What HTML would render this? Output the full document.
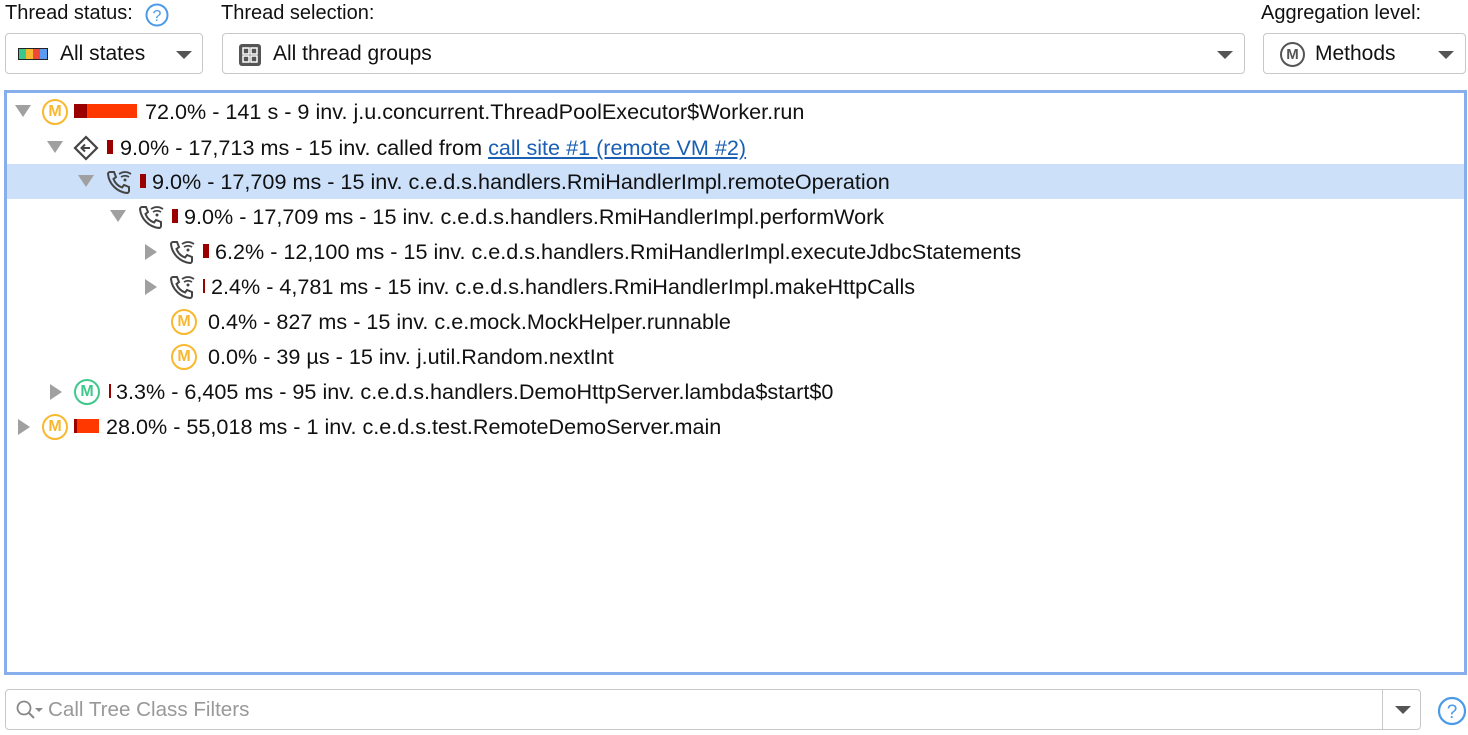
<!DOCTYPE html>
<html><head><style>
*{box-sizing:border-box;margin:0;padding:0}
body{width:1468px;height:735px;background:#fff;font-family:"Liberation Sans",sans-serif;font-size:20px;color:#111;position:relative;overflow:hidden}
.abs{position:absolute}
.lbl{position:absolute;top:2px;font-size:20px;color:#111}
.combo{position:absolute;top:33px;height:41px;border:1px solid #c8c8c8;border-radius:4px;background:#fff}
.combo .t{position:absolute;top:8px;font-size:21px}
.dd{position:absolute;top:17px;width:0;height:0;border-left:8px solid transparent;border-right:8px solid transparent;border-top:8px solid #555}
.tree{position:absolute;left:4px;top:90px;width:1463px;height:585px;border:3px solid #86aeea}
.row{position:absolute;left:0;height:35px;white-space:nowrap;line-height:35px;font-size:21.6px}
.sel{background:#cce0fa}
.tri-d{position:absolute;top:11px;width:0;height:0;border-left:8px solid transparent;border-right:8px solid transparent;border-top:12px solid #a0a0a0}
.tri-r{position:absolute;top:10px;width:0;height:0;border-top:8px solid transparent;border-bottom:8px solid transparent;border-left:12px solid #a0a0a0}
.m{position:absolute;top:5px;width:26px;height:26px;border:2.5px solid #f8b830;border-radius:50%;color:#f8b830;font-size:16px;font-weight:bold;line-height:22px;text-align:center}
.g{border-color:#3ec88a;color:#3ec88a}
.bar{position:absolute;top:10px;height:14px}
.txt{position:absolute;top:0}
a{color:#1a5fb4;text-decoration:underline}
</style></head><body>
<div class="lbl" style="left:5px">Thread status:</div>
<svg class="abs" style="left:145px;top:3px" width="24" height="24"><circle cx="12" cy="12" r="10.5" fill="none" stroke="#4a9ae8" stroke-width="2"/><text x="12" y="18" font-size="16" text-anchor="middle" fill="#4a9ae8" font-family="Liberation Sans">?</text></svg>
<div class="lbl" style="left:221px">Thread selection:</div>
<div class="lbl" style="left:1261px">Aggregation level:</div>

<div class="combo" style="left:5px;width:198px">
<div class="abs" style="left:12px;top:14px;width:30px;height:12px;border:1px solid #222;display:flex"><span style="flex:1;background:#3cc88c"></span><span style="flex:1;background:#f8b830"></span><span style="flex:1;background:#f04838"></span><span style="flex:1;background:#5a9af0"></span></div>
<div class="t" style="left:54px">All states</div><div class="dd" style="left:170px"></div></div>

<div class="combo" style="left:222px;width:1023px">
<svg class="abs" style="left:15px;top:9px" width="24" height="24"><rect x="1" y="1" width="22" height="22" rx="3" fill="#555"/><rect x="5" y="5" width="6" height="6" fill="none" stroke="#fff" stroke-width="1.5"/><rect x="13" y="5" width="6" height="6" fill="none" stroke="#fff" stroke-width="1.5"/><rect x="5" y="13" width="6" height="6" fill="none" stroke="#fff" stroke-width="1.5"/><rect x="13" y="13" width="6" height="6" fill="none" stroke="#fff" stroke-width="1.5"/></svg>
<div class="t" style="left:50px">All thread groups</div><div class="dd" style="left:994px"></div></div>

<div class="combo" style="left:1263px;width:203px">
<div class="abs" style="left:16px;top:8px;width:25px;height:25px;border:2.5px solid #555;border-radius:50%;color:#555;font-size:15px;font-weight:bold;line-height:21px;text-align:center">M</div>
<div class="t" style="left:51px">Methods</div><div class="dd" style="left:174px"></div></div>

<div class="tree">
<div class="row" style="top:1px;width:1457px">
 <div class="tri-d" style="left:8px"></div><div class="m" style="left:35px">M</div>
 <div class="bar" style="left:67px;width:13px;background:#9a0000"></div><div class="bar" style="left:80px;width:50px;background:#ff3800"></div>
 <div class="txt" style="left:138px">72.0% - 141 s - 9 inv. j.u.concurrent.ThreadPoolExecutor$Worker.run</div></div>
<div class="row" style="top:37px;width:1457px">
 <div class="tri-d" style="left:40px"></div>
 <svg class="abs" style="left:66px;top:5px" width="26" height="26"><path d="M13 2 L24 13 L13 24 L2 13 Z" fill="none" stroke="#444" stroke-width="2.2"/><path d="M17 13 H9 M12 9.5 L8.5 13 L12 16.5" fill="none" stroke="#444" stroke-width="2"/></svg>
 <div class="bar" style="left:100px;width:6px;background:#9a0000"></div>
 <div class="txt" style="left:113px">9.0% - 17,713 ms - 15 inv. called from <a>call site #1 (remote VM #2)</a></div></div>
<div class="row sel" style="top:71px;width:1457px">
 <div class="tri-d" style="left:71px"></div>
 <svg class="abs" style="left:99px;top:5px" width="26" height="26"><path d="M4 3 L8 3 L10 8 L7.5 10 C9 14 12 17 16 18.5 L18 16 L23 18 L23 22 C23 23 22 24 21 24 C11 23 3 15 2 5 C2 4 3 3 4 3 Z" fill="none" stroke="#444" stroke-width="2"/><path d="M13 5 Q19 1 25 5 M15 8 Q19 5.5 23 8" fill="none" stroke="#444" stroke-width="1.8"/><circle cx="19" cy="11" r="1.5" fill="#444"/></svg>
 <div class="bar" style="left:133px;width:6px;background:#9a0000"></div>
 <div class="txt" style="left:145px">9.0% - 17,709 ms - 15 inv. c.e.d.s.handlers.RmiHandlerImpl.remoteOperation</div></div>
<div class="row" style="top:106px">
 <div class="tri-d" style="left:103px"></div>
 <svg class="abs" style="left:131px;top:5px" width="26" height="26"><path d="M4 3 L8 3 L10 8 L7.5 10 C9 14 12 17 16 18.5 L18 16 L23 18 L23 22 C23 23 22 24 21 24 C11 23 3 15 2 5 C2 4 3 3 4 3 Z" fill="none" stroke="#444" stroke-width="2"/><path d="M13 5 Q19 1 25 5 M15 8 Q19 5.5 23 8" fill="none" stroke="#444" stroke-width="1.8"/><circle cx="19" cy="11" r="1.5" fill="#444"/></svg>
 <div class="bar" style="left:165px;width:6px;background:#9a0000"></div>
 <div class="txt" style="left:177px">9.0% - 17,709 ms - 15 inv. c.e.d.s.handlers.RmiHandlerImpl.performWork</div></div>
<div class="row" style="top:141px">
 <div class="tri-r" style="left:138px"></div>
 <svg class="abs" style="left:162px;top:5px" width="26" height="26"><path d="M4 3 L8 3 L10 8 L7.5 10 C9 14 12 17 16 18.5 L18 16 L23 18 L23 22 C23 23 22 24 21 24 C11 23 3 15 2 5 C2 4 3 3 4 3 Z" fill="none" stroke="#444" stroke-width="2"/><path d="M13 5 Q19 1 25 5 M15 8 Q19 5.5 23 8" fill="none" stroke="#444" stroke-width="1.8"/><circle cx="19" cy="11" r="1.5" fill="#444"/></svg>
 <div class="bar" style="left:196px;width:6px;background:#9a0000"></div>
 <div class="txt" style="left:208px">6.2% - 12,100 ms - 15 inv. c.e.d.s.handlers.RmiHandlerImpl.executeJdbcStatements</div></div>
<div class="row" style="top:176px">
 <div class="tri-r" style="left:138px"></div>
 <svg class="abs" style="left:162px;top:5px" width="26" height="26"><path d="M4 3 L8 3 L10 8 L7.5 10 C9 14 12 17 16 18.5 L18 16 L23 18 L23 22 C23 23 22 24 21 24 C11 23 3 15 2 5 C2 4 3 3 4 3 Z" fill="none" stroke="#444" stroke-width="2"/><path d="M13 5 Q19 1 25 5 M15 8 Q19 5.5 23 8" fill="none" stroke="#444" stroke-width="1.8"/><circle cx="19" cy="11" r="1.5" fill="#444"/></svg>
 <div class="bar" style="left:196px;width:2px;background:#9a0000"></div>
 <div class="txt" style="left:204px">2.4% - 4,781 ms - 15 inv. c.e.d.s.handlers.RmiHandlerImpl.makeHttpCalls</div></div>
<div class="row" style="top:211px">
 <div class="m" style="left:164px">M</div>
 <div class="txt" style="left:201px">0.4% - 827 ms - 15 inv. c.e.mock.MockHelper.runnable</div></div>
<div class="row" style="top:246px">
 <div class="m" style="left:164px">M</div>
 <div class="txt" style="left:201px">0.0% - 39 µs - 15 inv. j.util.Random.nextInt</div></div>
<div class="row" style="top:281px">
 <div class="tri-r" style="left:43px"></div>
 <div class="m g" style="left:67px">M</div>
 <div class="bar" style="left:102px;width:2px;background:#9a0000"></div>
 <div class="txt" style="left:109px">3.3% - 6,405 ms - 95 inv. c.e.d.s.handlers.DemoHttpServer.lambda$start$0</div></div>
<div class="row" style="top:316px">
 <div class="tri-r" style="left:11px"></div>
 <div class="m" style="left:35px">M</div>
 <div class="bar" style="left:67px;width:3px;background:#9a0000"></div><div class="bar" style="left:70px;width:22px;background:#ff3800"></div>
 <div class="txt" style="left:99px">28.0% - 55,018 ms - 1 inv. c.e.d.s.test.RemoteDemoServer.main</div></div>
</div>

<div class="abs" style="left:5px;top:689px;width:1416px;height:41px;border:1px solid #c8c8c8;border-radius:4px">
 <svg class="abs" style="left:9px;top:9px" width="30" height="24"><circle cx="9" cy="9" r="6.5" fill="none" stroke="#888" stroke-width="1.8"/><path d="M13.5 13.5 L19 19" stroke="#888" stroke-width="2"/><path d="M20 9 L28 9 L24 13 Z" fill="#888"/></svg>
 <div class="abs" style="left:42px;top:8px;color:#999;font-size:20.6px">Call Tree Class Filters</div>
 <div class="abs" style="left:1376px;top:0;width:1px;height:39px;background:#c8c8c8"></div>
 <div class="dd" style="left:1389px;top:16px"></div>
</div>
<svg class="abs" style="left:1437px;top:696px" width="30" height="30"><circle cx="15" cy="15" r="13" fill="none" stroke="#4a9ae8" stroke-width="2.2"/><text x="15" y="22" font-size="19" text-anchor="middle" fill="#4a9ae8" font-family="Liberation Sans">?</text></svg>
</body></html>
